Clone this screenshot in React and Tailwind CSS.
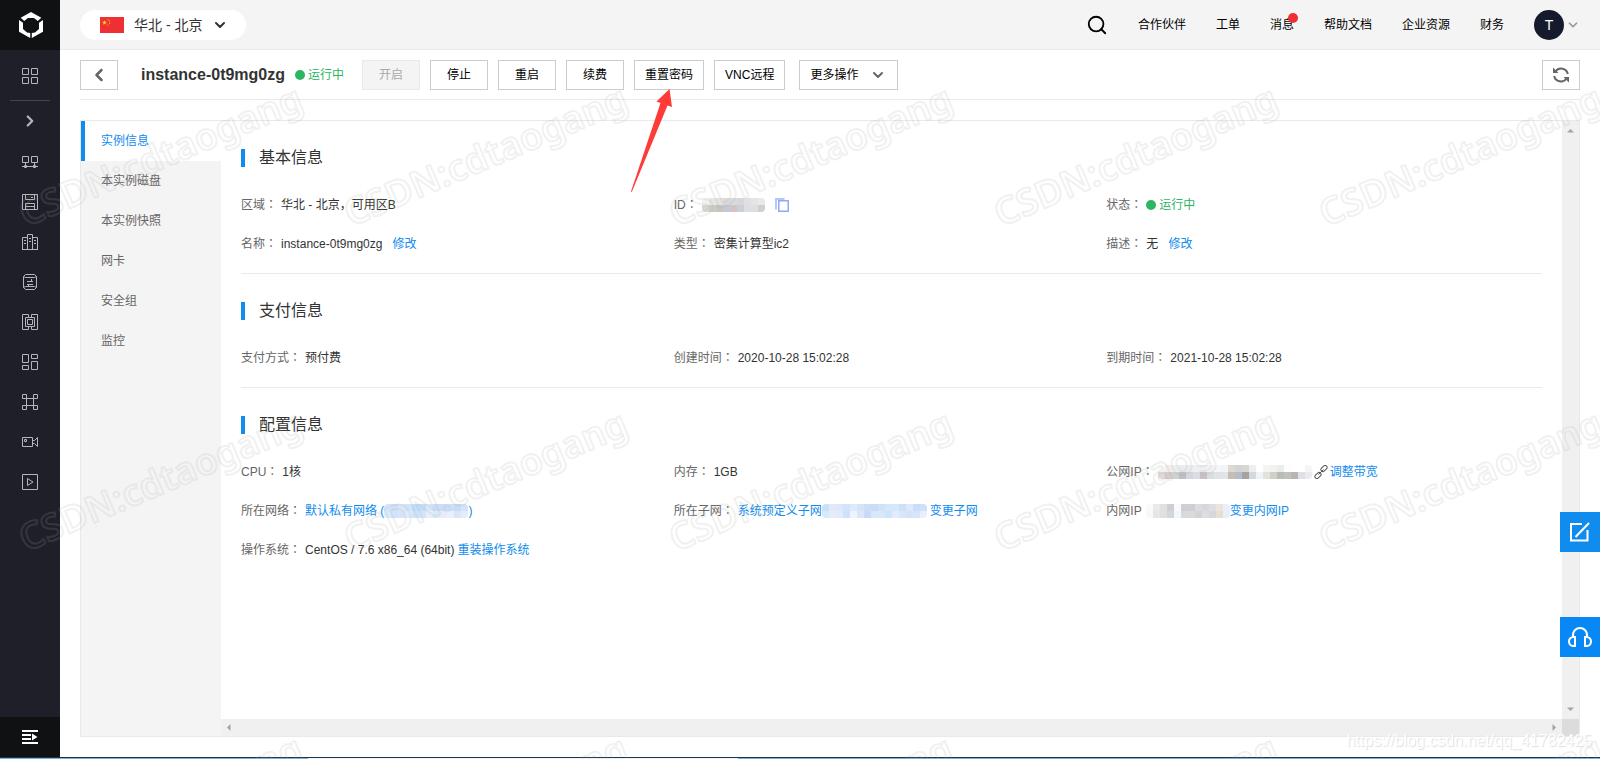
import React from "react";
import { ChevronDown, ChevronLeft, ChevronRight, Search } from "lucide-react";

const sideIcons = [
  {
    label: "网络",
    body: (
      <>
        <path d="M.5 2.5h6v6h-6zM9.5 2.5h6v6h-6zM0 12.5h16M3.5 9v3M12.5 9v3" />
        <path d="M2.5 11.5h2v2h-2zM11.5 11.5h2v2h-2z" />
      </>
    ),
  },
  {
    label: "磁盘",
    body: <path d="M.5 .5h15v15H.5zM3.5 .5v5h9v-5M9 3.5h2M3.5 15.5v-6h9v6M3.5 12.5h9" />,
  },
  {
    label: "企业",
    body: <path d="M.5 15.5v-12h5v12M5.5 15.5V.5h5v15M10.5 3.5h5v12M0 15.5h16M7 4.5h2M7 7.5h2M2 6.5h2M2 9.5h2M12 6.5h2M12 9.5h2" />,
  },
  {
    label: "数据库",
    body: (
      <>
        <path d="M1.5 2.5v11M14.5 2.5v11M5 7.5h6M9.5 5v2.5M5 10.5h6M6.5 10.5V13" />
        <path d="M1.5 2.5l2-2h9l2 2-2 1h-9zM1.5 13.5l2 2h9l2-2-2-1h-9z" />
      </>
    ),
  },
  {
    label: "容器",
    body: <path d="M6.5 3V.5h-6v15h6V13M9.5 3V.5h6v15h-6V13M3.5 3.5h9v9h-9zM5.5 5.5h5v5h-5z" />,
  },
  {
    label: "应用",
    body: <path d="M.5 .5h6v8h-6zM9.5 .5h6v4h-6zM.5 11.5h6v4h-6zM9.5 7.5h6v8h-6z" />,
  },
  {
    label: "中间件",
    body: <path d="M.5 .5h4v4h-4zM11.5 .5h4v4h-4zM.5 11.5h4v4h-4zM11.5 11.5h4v4h-4zM4.5 4v8M11.5 4v8M4 4.5h8M4 11.5h8" />,
  },
  {
    label: "视频",
    body: <path d="M.5 3.5h10v9H.5zM2.5 5.5h2v2h-2zM10.5 6.5h2l3-3v9l-3-3h-2" />,
  },
  {
    label: "播放",
    body: <path d="M.5 .5h15v15H.5zM5.5 4.5v7L11 8z" />,
  },
];

const SideIcon = ({ children }) => (
  <svg width="16" height="16" viewBox="0 0 16 16" fill="none" stroke="currentColor">
    {children}
  </svg>
);

const Sidebar = () => (
  <aside className="flex w-[60px] shrink-0 flex-col bg-[#1f1f29] text-[#b5b5ba]">
    <a href="#home" aria-label="首页" className="flex h-[50px] items-center justify-center bg-[#101112] pl-0.5">
      <svg width="24" height="26" viewBox="0 0 24 26" fill="#fff">
        <path d="M12 0l10.3 5.8L18.8 9 15 6H9L5.2 9 1.7 5.8z" />
        <path d="M0 8l4 2.8V17l4 3.5 3.2.5v5L0 19.8z" />
        <path d="M24 8l-4 2.8V17l-4 3.5-3.2.5v5L24 19.8z" />
      </svg>
    </a>
    <nav className="flex flex-1 flex-col">
      <a href="#products" aria-label="产品" className="flex h-[50px] items-center justify-center pt-0.5">
        <SideIcon>
          <path d="M.5 .5h6v6h-6zM9.5 .5h6v6h-6zM.5 9.5h6v6h-6zM9.5 9.5h6v6h-6z" />
        </SideIcon>
      </a>
      <div className="mx-2.5 h-px bg-[#44444e]" />
      <button aria-label="展开" className="mb-px flex h-10 items-center justify-center">
        <ChevronRight size={18} strokeWidth={3} />
      </button>
      {sideIcons.map((icon) => (
        <a key={icon.label} href="#service" aria-label={icon.label} className="flex h-10 items-center justify-center">
          <SideIcon>{icon.body}</SideIcon>
        </a>
      ))}
    </nav>
    <button aria-label="收起菜单" className="flex h-10 items-center justify-center bg-[#101112] text-white">
      <svg width="16" height="14" viewBox="0 0 16 14" fill="currentColor">
        <path d="M0 0h16v2H0zM0 4h9v2H0zM0 8h9v2H0zM0 12h16v2H0zM10 3.5L15.5 7 10 10.5z" />
      </svg>
    </button>
  </aside>
);

const Flag = () => (
  <svg width="24" height="16" viewBox="0 0 24 16">
    <path fill="#ee2f33" d="M0 0h24v16H0z" />
    <path fill="#ffd800" d="M4.5 3l.6 1.8H7L5.5 6l.6 1.8-1.6-1.1-1.6 1.1L3.5 6 2 4.8h1.900z" />
    <path fill="#f5a02a" d="M7.5 2h1.200v1.200H7.500zM9 3.600h1.200v1.200H9zM9 5.800h1.200V7H9zM7.500 7.400h1.200v1.200H7.500z" />
  </svg>
);

const Header = () => (
  <header className="flex h-[50px] items-center border-b border-[#e9e9e9] bg-[#f4f4f4] pr-5 pl-5">
    <button className="flex h-[30px] items-center rounded-full bg-white pr-[18px] pl-5 text-sm text-[#333]">
      <Flag />
      <span className="ml-2.5">华北 - 北京</span>
      <ChevronDown size={16} strokeWidth={3} className="ml-2.5" />
    </button>
    <nav className="ml-auto flex items-center gap-[30px] text-xs text-black">
      <button aria-label="搜索">
        <Search size={22} strokeWidth={2} />
      </button>
      <a href="#partner">合作伙伴</a>
      <a href="#ticket">工单</a>
      <a href="#message" className="relative">
        消息
        <span className="absolute -top-1 -right-1 h-2.5 w-2.5 rounded-full bg-[#ee2f33]" />
      </a>
      <a href="#docs">帮助文档</a>
      <a href="#enterprise">企业资源</a>
      <a href="#finance">财务</a>
      <button className="flex items-center gap-0.5">
        <span className="flex h-[30px] w-[30px] items-center justify-center rounded-full bg-[#151b2c] text-sm text-white">
          T
        </span>
        <ChevronDown size={14} strokeWidth={3} className="text-[#999]" />
      </button>
    </nav>
  </header>
);

const Running = () => (
  <span className="flex items-center gap-[3px] text-xs text-[#2cb663]">
    <span className="h-2.5 w-2.5 rounded-full bg-[#2cb663]" />
    运行中
  </span>
);

const ToolButton = ({ children, className = "min-w-[58px] px-2.5" }) => (
  <button className={`h-[30px] border border-[#ccc] bg-white text-xs text-black ${className}`}>
    {children}
  </button>
);

const Toolbar = () => (
  <div className="mx-5 flex h-[50px] items-center border-b border-[#e9e9e9]">
    <button aria-label="返回" className="flex h-[30px] w-[38px] items-center justify-center border border-[#ccc] text-[#666]">
      <ChevronLeft size={20} strokeWidth={3} />
    </button>
    <h1 className="ml-[23px] text-base font-bold text-[#333]">instance-0t9mg0zg</h1>
    <div className="ml-2.5">
      <Running />
    </div>
    <div className="ml-[18px] flex gap-2.5">
      <button disabled className="h-[30px] w-[58px] border border-[#e9e9e9] bg-[#f4f4f4] text-xs text-[#aaa]">
        开启
      </button>
      <ToolButton>停止</ToolButton>
      <ToolButton>重启</ToolButton>
      <ToolButton>续费</ToolButton>
      <div className="relative">
        <ToolButton>重置密码</ToolButton>
        <svg
          width="44"
          height="103"
          viewBox="0 0 44 103"
          fill="#ff3b38"
          className="pointer-events-none absolute top-[29px] -left-[3px] z-20"
        >
          <path d="M38.5 0L41 18l-4.500-1.500L.8 103 0 102.600 29.500 14l-4-1.500z" />
        </svg>
      </div>
      <ToolButton>VNC远程</ToolButton>
      <ToolButton className="ml-1 flex items-center gap-3 pr-[11px] pl-2.5">
        更多操作
        <ChevronDown size={16} strokeWidth={3} className="text-[#666]" />
      </ToolButton>
    </div>
    <button aria-label="刷新" className="ml-auto flex h-[30px] w-[38px] items-center justify-center border border-[#ccc] text-[#666]">
      <svg width="16" height="16" viewBox="0 0 16 16" fill="none" stroke="currentColor" strokeWidth="2">
        <path d="M2.5 4.5A6.800 6.800 0 0 1 14.800 7M13.500 11.500A6.800 6.800 0 0 1 1.200 9" />
        <path d="M0 .5V6h5.500zM16 15.500V10h-5.500z" fill="currentColor" stroke="none" />
      </svg>
    </button>
  </div>
);

const tabs = ["实例信息", "本实例磁盘", "本实例快照", "网卡", "安全组", "监控"];

const Tabs = () => (
  <nav className="w-[140px] shrink-0 bg-[#f4f4f4] text-xs text-[#666]">
    {tabs.map((tab, i) => (
      <a
        key={tab}
        href="#tab"
        className={
          i === 0
            ? "flex h-10 items-center border-l-4 border-[#108cee] bg-white pl-4 text-[#108cee]"
            : "flex h-10 items-center pl-5"
        }
      >
        {tab}
      </a>
    ))}
  </nav>
);

// blocks that hide private values, two rows of small squares
const Mosaic = ({ rows }) => (
  <span className="flex flex-col overflow-hidden rounded-sm" aria-hidden="true">
    {rows.map((row, r) => (
      <span key={r} className="flex">
        {row.map((color, i) => (
          <span key={i} className="h-[7px] w-[7px]" style={{ backgroundColor: color }} />
        ))}
      </span>
    ))}
  </span>
);

const idBlocks = [
  ["#f3f3f1", "#e6e6e2", "#e3e3df", "#d9dad8", "#d8dade", "#d9d6da", "#e0e0e2", "#e6e4e2", "#e9e9eb"],
  ["#d5d8d2", "#cacdc6", "#c9c4bd", "#c3c7d6", "#d3c3c5", "#c8d0d8", "#dddedf", "#e3dddd", "#ccd1d1"],
];
const publicIpBlocks = [
  ["#fbfafa", "#f3eeee", "#efefef", "#e9ebee", "#eceef2", "#f0eeee", "#eeeff1", "#f1f3f6", "#f6f6f6", "#f2f5f8", "#dcdad2", "#d3d4d4", "#d6d6d3", "#eceef0", "#ffffff", "#f4f4f1", "#f2f3f0", "#ebecec", "#fdfdfd", "#ffffff", "#ffffff", "#f5f5f6"],
  ["#e3d9d9", "#d5cccc", "#cfd0d2", "#bfbec0", "#d3d6de", "#dbdce5", "#c7c1c3", "#dadce0", "#dfe2e7", "#dfe5ea", "#c6beb2", "#b4bcc6", "#a6a39f", "#d4d9e0", "#eff3f6", "#e2e3dc", "#cfd0c6", "#b9beb4", "#c2bfbe", "#b9b5b5", "#dde1e7", "#eaebed"],
];
const innerIpBlocks = [
  ["#fafafb", "#e8e9eb", "#e0e0dc", "#cfced4", "#f8fafd", "#d2ced3", "#cfced3", "#dcdcdf", "#d7d8dc", "#dddee1", "#ebe4da", "#e8f0fb"],
  ["#f7f8fa", "#e6e6e6", "#dfe1df", "#d3d6da", "#f3f7fc", "#dad9d9", "#dadad6", "#d3d4d6", "#dcdee2", "#d8d6d8", "#e7dfd2", "#e4f0fd"],
];
const networkBlocks = [
  ["#d5e6fb", "#cfe0fb", "#d8e8fb", "#d3e4fa", "#c2dffa", "#c2dffa", "#d9e8fa", "#cbdcf8", "#cbdcf8", "#cddff8", "#c6dbf8", "#d3e3fa"],
  ["#dceafc", "#cfe5fb", "#d9e4fc", "#dfebfc", "#cfe3fa", "#d4e5fa", "#e6effc", "#d9eaf9", "#e6ecfb", "#eaf0fc", "#dbe5fa", "#e3ecfb"],
];
const subnetBlocks = [
  ["#cbe1f7", "#e0e8fa", "#dbe8fb", "#d3e4fa", "#dceafb", "#d5e4fb", "#cfdef8", "#c8dcf7", "#cfe2f8", "#d4e6fa", "#d6e7fb", "#cde0f9", "#dfe8fb", "#c9dcf8", "#cfe0fa"],
  ["#d8e9fb", "#e5ecfc", "#e4eafb", "#cfe2fb", "#edf4fd", "#dbe6fb", "#c8daf7", "#d7e8fa", "#d7e8fa", "#cfe3fa", "#e4ebfb", "#d8e6fb", "#d2e3fa", "#d7e4fb", "#e9effc"],
];

const Colon = () => (
  <span className="font-['Liberation_Sans','Noto_Sans_CJK_TC',sans-serif]">：</span>
);

const Link = ({ children }) => (
  <a href="#edit" className="text-[#108cee]">
    {children}
  </a>
);

const Field = ({ label, colon = true, children }) => (
  <div className="flex h-[39px] items-center gap-1 whitespace-nowrap">
    <dt className="text-[#666]">
      {label}
      {colon && <Colon />}
    </dt>
    <dd className="flex items-center">{children}</dd>
  </div>
);

const Section = ({ title, last, children }) => (
  <section className={last ? "pt-7 pb-2.5" : "border-b border-[#e9e9e9] pt-7 pb-2.5"}>
    <h2 className="flex h-[18px] items-center border-l-4 border-[#108cee] pl-3.5 text-base text-[#333]">{title}</h2>
    <dl className="mt-[18px] grid grid-cols-3 pr-[3px] text-xs text-[#333]">{children}</dl>
  </section>
);

const Details = () => (
  <div className="min-w-0 flex-1 px-5">
    <Section title="基本信息">
      <Field label="区域">华北 - 北京，可用区B</Field>
      <Field label="ID">
        <Mosaic rows={idBlocks} />
        <button aria-label="复制" className="ml-2.5">
          <svg width="14" height="14" viewBox="0 0 14 14" fill="none">
            <path d="M1 11.5V1h8.500" stroke="#b4c8fa" strokeWidth="2" />
            <path d="M3.8 2.800h9.400v10.400H3.800z" fill="#fff" stroke="#8fa9f5" strokeWidth="1.5" />
          </svg>
        </button>
      </Field>
      <Field label="状态">
        <Running />
      </Field>
      <Field label="名称">
        <span className="mr-2.5">instance-0t9mg0zg</span>
        <Link>修改</Link>
      </Field>
      <Field label="类型">密集计算型ic2</Field>
      <Field label="描述">
        <span className="mr-2.5">无</span>
        <Link>修改</Link>
      </Field>
    </Section>
    <Section title="支付信息">
      <Field label="支付方式">预付费</Field>
      <Field label="创建时间">2020-10-28 15:02:28</Field>
      <Field label="到期时间">2021-10-28 15:02:28</Field>
    </Section>
    <Section title="配置信息" last>
      <Field label="CPU">1核</Field>
      <Field label="内存">1GB</Field>
      <Field label="公网IP">
        <Mosaic rows={publicIpBlocks} />
        <svg width="14" height="14" viewBox="0 0 14 14" fill="none" stroke="#555" className="mx-0.5">
          <rect x="6.5" y="1.5" width="7" height="4" rx="2" transform="rotate(-45 10 3.5)" />
          <rect x=".5" y="8.5" width="7" height="4" rx="2" transform="rotate(-45 4 10.5)" />
          <path d="M4.5 9.5l5-5" />
        </svg>
        <Link>调整带宽</Link>
      </Field>
      <Field label="所在网络">
        <a href="#vpc" className="flex items-center text-[#108cee]">
          默认私有网络 (
          <Mosaic rows={networkBlocks} />)
        </a>
      </Field>
      <Field label="所在子网">
        <Link>系统预定义子网</Link>
        <span className="mr-[3px]">
          <Mosaic rows={subnetBlocks} />
        </span>
        <Link>变更子网</Link>
      </Field>
      <Field label="内网IP" colon={false}>
        <Mosaic rows={innerIpBlocks} />
        <Link>变更内网IP</Link>
      </Field>
      <Field label="操作系统">
        <span className="mr-[3px]">CentOS / 7.6 x86_64 (64bit)</span>
        <Link>重装操作系统</Link>
      </Field>
    </Section>
  </div>
);

const Arrow = ({ d }) => (
  <svg width="7" height="7" viewBox="0 0 7 7" fill="#a3a3a3">
    <path d={d} />
  </svg>
);

const Panel = () => (
  <div className="mx-5 mt-5 mb-5 flex flex-1 border border-[#e9e9e9]">
    <Tabs />
    <div className="flex min-w-0 flex-1 flex-col">
      <div className="flex flex-1">
        <Details />
        <div className="flex w-[17px] flex-col items-center justify-between bg-[#f0f0f0] py-1.5">
          <Arrow d="M0 5.5L3.5 2 7 5.5z" />
          <Arrow d="M0 1.5L3.5 5 7 1.5z" />
        </div>
      </div>
      <div className="flex h-[17px]">
        <div className="flex flex-1 items-center justify-between bg-[#f0f0f0] px-1">
          <Arrow d="M5.5 0L2 3.5 5.5 7z" />
          <Arrow d="M1.5 0L5 3.5 1.5 7z" />
        </div>
        <div className="w-[17px] bg-[#dcdcdc]" />
      </div>
    </div>
  </div>
);

const FloatButtons = () => (
  <div className="absolute top-[512px] right-0 z-20 flex flex-col gap-[65px] text-white">
    <button aria-label="反馈" className="flex h-10 w-10 items-center justify-center bg-[#108cee]">
      <svg width="20" height="20" viewBox="0 0 20 20" fill="none" stroke="currentColor" strokeWidth="2">
        <path d="M12 2H1v16.5h16.5V8M5.5 15L19 1" />
      </svg>
    </button>
    <button aria-label="客服" className="flex h-10 w-10 items-center justify-center bg-[#0788f5]">
      <svg width="24" height="20" viewBox="0 0 24 20" fill="none" stroke="currentColor" strokeWidth="2">
        <path d="M5 10V8a7 7 0 0 1 14 0v2" />
        <path d="M7 10v9H5.5a4.5 4.5 0 0 1 0-9zM17 10v9h1.5a4.5 4.5 0 0 0 0-9z" />
      </svg>
    </button>
  </div>
);

const watermarkX = [26, 351, 676, 1001, 1326];
const watermarkY = [227, 552, 877];

const Watermark = () => (
  <div className="pointer-events-none absolute inset-0 z-10 overflow-hidden" aria-hidden="true">
    <svg width="100%" height="100%">
      {watermarkY.map((y) =>
        watermarkX.map((x) => (
          <text
            key={`${x}-${y}`}
            transform={`translate(${x} ${y}) rotate(-23)`}
            className="fill-none stroke-[#aaaaa4]/18 stroke-2 font-['Noto_Sans',sans-serif] text-[37px] font-semibold [stroke-linejoin:round]"
          >
            CSDN:cdtaogang
          </text>
        ))
      )}
    </svg>
    <span className="absolute right-2 bottom-1.5 text-base text-white [text-shadow:1px_1px_1px_#ddd]">
      https://blog.csdn.net/qq_41782425
    </span>
  </div>
);

const App = () => (
  <div className="relative flex min-h-screen flex-col bg-white font-['Liberation_Sans','Noto_Sans_CJK_SC',sans-serif]">
    <div className="flex flex-1">
      <Sidebar />
      <main className="flex min-w-0 flex-1 flex-col">
        <Header />
        <Toolbar />
        <Panel />
      </main>
    </div>
    <div className="flex h-0.5 border-t border-[#1f3547] bg-[#7fb0d8] pl-[308px]">
      <div className="w-[430px] bg-[#eef5fa]" />
    </div>
    <Watermark />
    <FloatButtons />
  </div>
);

export default App;
